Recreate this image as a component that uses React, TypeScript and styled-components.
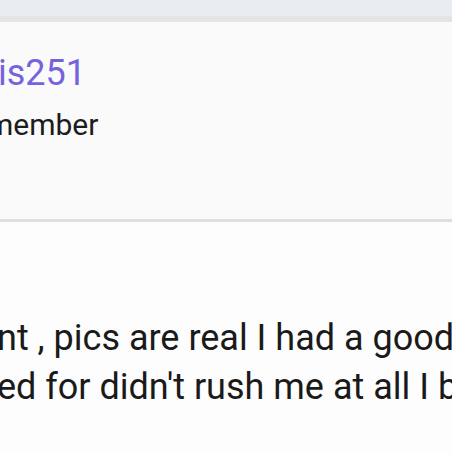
import React from "react";
import styled, { createGlobalStyle } from "styled-components";

const Global = createGlobalStyle`
  html, body {
    margin: 0;
    padding: 0;
    background: #fdfdfd;
    overflow: hidden;
  }
  body {
    font-family: Roboto, "Noto Sans", "Liberation Sans", sans-serif;
    -webkit-font-smoothing: antialiased;
  }
`;

const Page = styled.div`
  width: 452px;
  height: 453px;
  overflow: hidden;
  background: #fdfdfd;
  display: flex;
  flex-direction: column;
`;

const TopBar = styled.div`
  height: 16px;
  flex: none;
  background: #e9ecf0;
  border-bottom: 6px solid #e4e4e4;
  background-clip: padding-box;
`;

const Card = styled.section`
  flex: none;
  height: 200px;
  box-sizing: border-box;
  background: #fafafa;
  border-bottom: 3px solid #dfdfdf;
  padding: 29px 0 0 0;
  display: flex;
  flex-direction: column;
  gap: 12px;
`;

const Username = styled.div<{ $shift: number }>`
  font-size: 36px;
  line-height: 44px;
  color: #7463dd;
  white-space: nowrap;
  margin-left: ${(p) => p.$shift}px;
`;

const Role = styled.div<{ $shift: number }>`
  font-size: 30px;
  line-height: 36px;
  color: #1c1c1c;
  white-space: nowrap;
  margin-left: ${(p) => p.$shift}px;
`;

const Body = styled.div`
  margin-top: 92px;
  display: flex;
  flex-direction: column;
`;

const Line = styled.div<{ $shift: number }>`
  font-size: 36px;
  line-height: 49px;
  color: #1a1a1a;
  white-space: nowrap;
  margin-left: ${(p) => p.$shift}px;
`;

export default function App() {
  return (
    <>
      <Global />
      <Page>
        <TopBar />
        <Card>
          <Username $shift={-2}>is251</Username>
          <Role $shift={-13}>member</Role>
        </Card>
        <Body>
          <Line $shift={-3}>nt , pics are real I had a good time</Line>
          <Line $shift={-3}>ed for didn't rush me at all I b</Line>
        </Body>
      </Page>
    </>
  );
}
